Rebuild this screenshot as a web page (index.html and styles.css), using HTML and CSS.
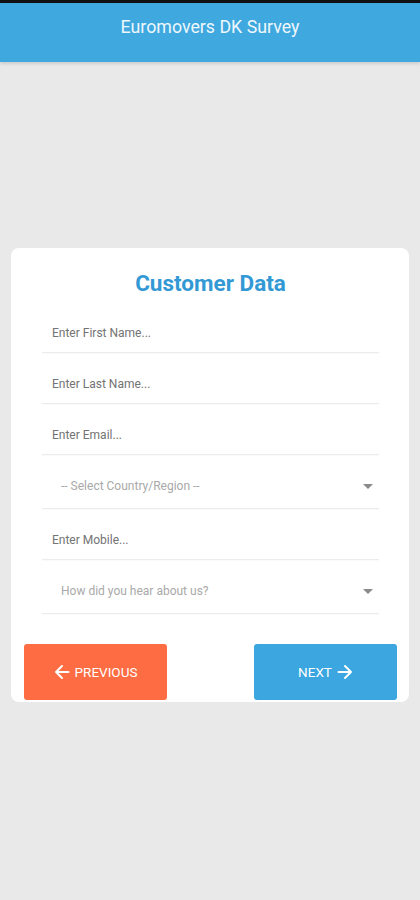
FILE: index.html
```html
<!DOCTYPE html>
<html>
<head>
<meta charset="utf-8">
<link rel="stylesheet" href="styles.css">
</head>
<body>
<div class="statusbar"></div>
<header class="appbar">Euromovers DK Survey</header>
<main class="content">
  <section class="card">
    <h1 class="card-title">Customer Data</h1>
    <div class="fields">
      <div class="field"><span class="ph">Enter First Name...</span></div>
      <div class="field"><span class="ph">Enter Last Name...</span></div>
      <div class="field"><span class="ph">Enter Email...</span></div>
      <div class="field select"><span class="ph">-- Select Country/Region --</span><span class="caret"></span></div>
      <div class="field"><span class="ph">Enter Mobile...</span></div>
      <div class="field select"><span class="ph">How did you hear about us?</span><span class="caret"></span></div>
    </div>
    <div class="actions">
      <button class="btn btn-prev">
        <svg width="16" height="16" viewBox="0 0 16 16"><path d="M14.5 8H2M8 2L2 8 8 14" fill="none" stroke="#fff" stroke-width="2" stroke-linecap="round" stroke-linejoin="round"/></svg>
        <span>PREVIOUS</span>
      </button>
      <button class="btn btn-next">
        <span>NEXT</span>
        <svg width="16" height="16" viewBox="0 0 16 16"><path d="M1.5 8H14M8 2L14 8 8 14" fill="none" stroke="#fff" stroke-width="2" stroke-linecap="round" stroke-linejoin="round"/></svg>
      </button>
    </div>
  </section>
</main>
</body>
</html>
```
FILE: styles.css
```css
html, body {
  margin: 0;
  padding: 0;
}
body {
  width: 420px;
  height: 900px;
  background: #e9e9e9;
  font-family: Roboto, "Liberation Sans", sans-serif;
  overflow: hidden;
}
.statusbar {
  height: 3px;
  background: #111;
}
.appbar {
  height: 59px;
  background: #3ea8df;
  color: #eef7fc;
  font-size: 17.8px;
  display: flex;
  align-items: center;
  justify-content: center;
  padding-bottom: 12px;
  box-sizing: border-box;
  box-shadow: 0 2px 3px rgba(0,0,0,0.12);
  position: relative;
}
.content {
  padding: 186px 11px 0;
}
.card {
  background: #fff;
  border-radius: 8px;
  padding: 20px 12px 2px 13px;
}
.card-title {
  margin: 0;
  text-align: center;
  color: #3399d5;
  font-size: 22.5px;
  font-weight: 700;
  line-height: 30px;
}
.fields {
  margin: 4px 18px 0 18px;
}
.field {
  height: 51px;
  box-sizing: border-box;
  border-bottom: 1px solid #ececec;
  box-shadow: 0 1px 1px rgba(0,0,0,0.02);
  display: flex;
  padding: 24px 10px 0;
  line-height: 14px;
  align-items: flex-start;
  font-size: 12px;
  color: #737373;
}
.field.select {
  height: 54px;
  padding-left: 19px;
  padding-right: 6px;
  color: #a9a9a9;
  justify-content: space-between;
}
.caret {
  width: 0;
  height: 0;
  border-left: 5px solid transparent;
  border-right: 5px solid transparent;
  border-top: 5px solid #8a8a8a;
  margin-top: 5px;
}
.actions {
  display: flex;
  justify-content: space-between;
  margin-top: 30px;
}
.btn {
  width: 143px;
  height: 56px;
  border: none;
  border-radius: 3px;
  color: #fff;
  font-family: Roboto, "Liberation Sans", sans-serif;
  font-size: 13.5px;
  display: flex;
  align-items: center;
  justify-content: center;
  gap: 5px;
  padding: 0;
}
.btn-prev {
  background: #fd6c42;
}
.btn-next {
  background: #3ba6df;
}
```
